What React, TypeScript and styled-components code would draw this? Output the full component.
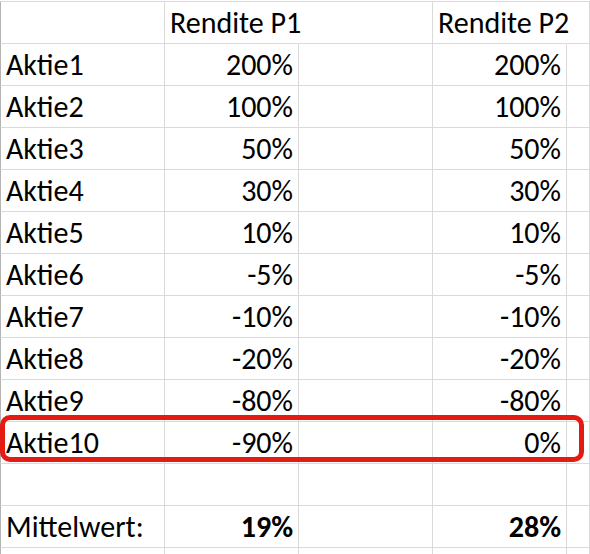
import styled, { createGlobalStyle } from "styled-components";

const GlobalStyle = createGlobalStyle`
    html, body {
        margin: 0;
        padding: 0;
        background: #ffffff;
    }
    body {
        font-family: "Carlito", "Lato", "Open Sans", sans-serif;
        color: #000000;
    }
`

type Row = { name: string, p1: string, p2: string }

const rows: Row[] = [
    { name: "Aktie1", p1: "200%", p2: "200%" },
    { name: "Aktie2", p1: "100%", p2: "100%" },
    { name: "Aktie3", p1: "50%", p2: "50%" },
    { name: "Aktie4", p1: "30%", p2: "30%" },
    { name: "Aktie5", p1: "10%", p2: "10%" },
    { name: "Aktie6", p1: "-5%", p2: "-5%" },
    { name: "Aktie7", p1: "-10%", p2: "-10%" },
    { name: "Aktie8", p1: "-20%", p2: "-20%" },
    { name: "Aktie9", p1: "-80%", p2: "-80%" },
    { name: "Aktie10", p1: "-90%", p2: "0%" },
]

export default function App() {
    return (
        <>
            <GlobalStyle />
            <Sheet>
                <SheetRow>
                    <Cell />
                    <Cell noRight>Rendite P1</Cell>
                    <Cell />
                    <Cell noRight>Rendite P2</Cell>
                    <Cell />
                </SheetRow>
                {rows.map(row => {
                    const marked = row.name === "Aktie10"
                    return (
                        <SheetRow key={row.name}>
                            <Cell>{row.name}</Cell>
                            <Cell right>{row.p1}</Cell>
                            <Cell />
                            <Cell right>{row.p2}</Cell>
                            <Cell />
                            {marked && <Marker />}
                        </SheetRow>
                    )
                })}
                <SheetRow>
                    <Cell />
                    <Cell />
                    <Cell />
                    <Cell />
                    <Cell />
                </SheetRow>
                <SheetRow>
                    <Cell>Mittelwert:</Cell>
                    <Cell right bold>19%</Cell>
                    <Cell />
                    <Cell right bold>28%</Cell>
                    <Cell />
                </SheetRow>
                <SheetRow>
                    <Cell />
                    <Cell />
                    <Cell />
                    <Cell />
                    <Cell />
                </SheetRow>
            </Sheet>
        </>
    )
}

const Sheet = styled.div`
    width: 590px;
    height: 554px;
    overflow: hidden;
    padding-top: 1px;
    box-sizing: border-box;
    & > div:first-child {
        border-top: 1px solid #dadada;
    }
`
const SheetRow = styled.div`
    position: relative;
    display: grid;
    grid-template-columns: 165px 134px 134px 134px 1fr;
    height: 42px;
    & > div:first-child {
        border-left: 1px solid #b4b4b4;
    }
`
const Cell = styled.div<{ right?: boolean, bold?: boolean, noRight?: boolean }>`
    box-sizing: border-box;
    display: flex;
    align-items: flex-end;
    justify-content: ${({ right }) => right ? "flex-end" : "flex-start"};
    padding: 0 5px 5px 5px;
    border-right: 1px solid ${({ noRight }) => noRight ? "transparent" : "#dadada"};
    border-bottom: 1px solid #dadada;
    font-size: 30px;
    font-weight: ${({ bold }) => bold ? 700 : 400};
    line-height: 1;
    white-space: nowrap;
    overflow: visible;
    position: relative;
    z-index: ${({ noRight }) => noRight ? 1 : 0};
`
const Marker = styled.div`
    position: absolute;
    left: 0;
    top: -7px;
    width: 584px;
    height: 47px;
    box-sizing: border-box;
    border: 5px solid #e31b12;
    border-radius: 10px;
    pointer-events: none;
    z-index: 2;
`
